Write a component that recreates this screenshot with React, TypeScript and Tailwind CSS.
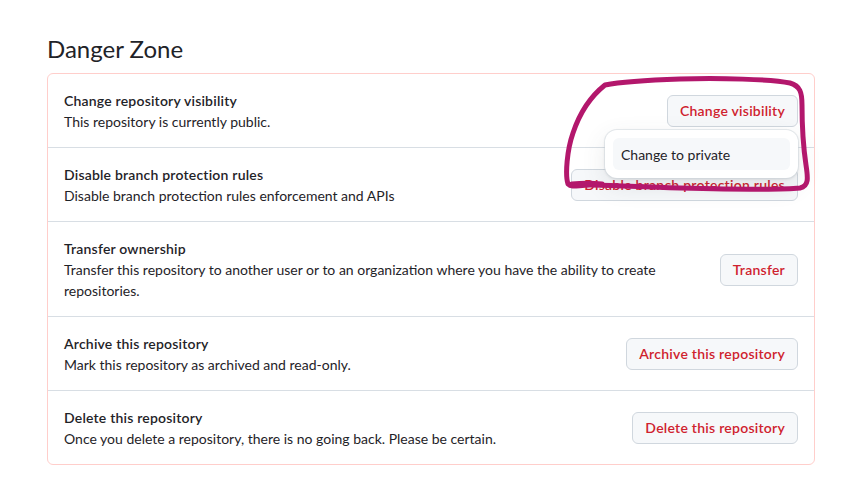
import React from "react";

const font = { fontFamily: 'Lato, "Noto Sans", sans-serif' };

function Btn({ children }: { children: React.ReactNode }) {
  return (
    <button className="h-8 shrink-0 whitespace-nowrap rounded-md border border-[#d0d7de] bg-[#f6f8fa] px-3 text-[14px] font-semibold leading-[20px] tracking-[0.25px] text-[#cf222e]">
      {children}
    </button>
  );
}

function Row({
  title,
  desc,
  action,
  first,
}: {
  title: string;
  desc: string;
  action: React.ReactNode;
  first?: boolean;
}) {
  return (
    <div
      className={
        "flex items-center justify-between gap-4 px-4 pb-[15px] pt-4 " +
        (first ? "relative z-10" : "border-t border-[#d8dee4]")
      }
    >
      <div className="text-[14px] leading-[21px] text-[#1f2328]">
        <div className="font-semibold tracking-[0.2px]">{title}</div>
        <div>{desc}</div>
      </div>
      {action}
    </div>
  );
}

export default function App() {
  return (
    <div className="relative h-[487px] w-[867px] overflow-hidden bg-white" style={font}>
      <div className="pl-[47px] pt-[31px]">
        <h2 className="mb-[6px] text-[24px] font-normal leading-[36px] text-[#1f2328]">Danger Zone</h2>
        <div className="w-[768px] rounded-md border border-[#ffcecb]">
          <Row
            first
            title="Change repository visibility"
            desc="This repository is currently public."
            action={
              <div className="relative">
                <Btn>Change visibility</Btn>
                <div className="absolute right-0 top-full mt-[3px] w-[193px] rounded-xl bg-white p-2 shadow-[0_0_0_1px_rgba(208,215,222,0.5),0_1px_3px_rgba(31,35,40,0.12),0_8px_24px_rgba(66,74,83,0.12)]">
                  <div className="flex h-8 items-center rounded-md bg-[#f6f8fa] px-2 text-[14px] text-[#1f2328]">
                    Change to private
                  </div>
                </div>
              </div>
            }
          />
          <Row
            title="Disable branch protection rules"
            desc="Disable branch protection rules enforcement and APIs"
            action={<Btn>Disable branch protection rules</Btn>}
          />
          <Row
            title="Transfer ownership"
            desc="Transfer this repository to another user or to an organization where you have the ability to create repositories."
            action={<Btn>Transfer</Btn>}
          />
          <Row
            title="Archive this repository"
            desc="Mark this repository as archived and read-only."
            action={<Btn>Archive this repository</Btn>}
          />
          <Row
            title="Delete this repository"
            desc="Once you delete a repository, there is no going back. Please be certain."
            action={<Btn>Delete this repository</Btn>}
          />
        </div>
      </div>
      <svg
        className="pointer-events-none absolute left-0 top-0 z-20"
        width="867"
        height="487"
        viewBox="0 0 867 487"
      >
        <path
          d="M605 85 C625 81 650 80 680 79 C720 78 770 79 790 83 C800 86 802 92 802 105 C802 125 803 145 806 165 C808 178 809 186 800 188 C780 190 720 189 680 188 C640 187 610 185 590 185 C578 185 572 188 568 184 C565 175 567 150 573 133 C578 118 586 100 605 85 Z"
          fill="none"
          stroke="#b3176c"
          strokeWidth="5"
          strokeLinecap="round"
          strokeLinejoin="round"
        />
        <path d="M572 184 C582 183 592 183 602 184" fill="none" stroke="#b3176c" strokeWidth="5" strokeLinecap="round" />
      </svg>
    </div>
  );
}
